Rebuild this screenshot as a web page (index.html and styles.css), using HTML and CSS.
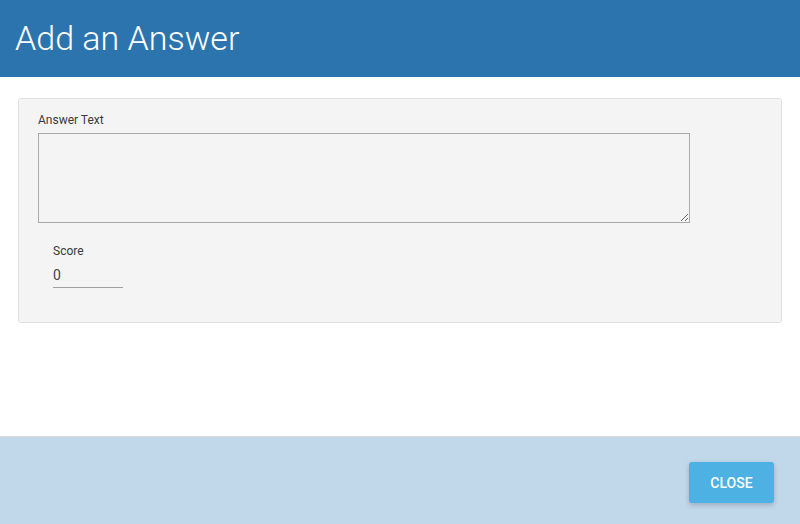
FILE: index.html
```html
<!DOCTYPE html>
<html>
<head>
<meta charset="utf-8">
<link rel="stylesheet" href="styles.css">
</head>
<body>
<div class="modal">
  <header class="modal-header">
    <h1 class="modal-title">Add an Answer</h1>
  </header>
  <main class="modal-body">
    <section class="panel">
      <label class="field-label">Answer Text</label>
      <textarea class="answer-text"></textarea>
      <div class="score-group">
        <label class="field-label">Score</label>
        <div class="score-input">0</div>
      </div>
    </section>
  </main>
  <footer class="modal-footer">
    <button class="btn-close">CLOSE</button>
  </footer>
</div>
</body>
</html>
```
FILE: styles.css
```css
* { box-sizing: border-box; }
html, body { margin: 0; padding: 0; }
body {
  font-family: Roboto, "Liberation Sans", sans-serif;
  width: 800px;
  height: 524px;
  overflow: hidden;
  background: #fff;
}
.modal {
  display: flex;
  flex-direction: column;
  height: 524px;
}
.modal-header {
  height: 77px;
  background: #2c74ad;
  padding: 0 15px 2px;
  display: flex;
  align-items: center;
}
.modal-title {
  margin: 0;
  font-weight: 300;
  font-size: 34px;
  color: #fff;
  line-height: 1;
}
.modal-body {
  flex: 1;
  padding: 21px 18px 0;
}
.panel {
  background: #f4f4f4;
  border: 1px solid #e0e0e0;
  border-radius: 3px;
  height: 225px;
  padding: 13px 19px 0;
  display: flex;
  flex-direction: column;
  align-items: flex-start;
}
.field-label {
  font-size: 12px;
  color: #3a3a3a;
  line-height: 16px;
}
.answer-text {
  margin-top: 5px;
  width: 652px;
  height: 90px;
  background: #f4f4f4;
  border: 1px solid #a8a8a8;
  border-radius: 0;
  resize: vertical;
  display: block;
}
.score-group {
  margin-top: 20px;
  margin-left: 15px;
  display: flex;
  flex-direction: column;
}
.score-input {
  margin-top: 8px;
  width: 70px;
  font-size: 14px;
  color: #444;
  line-height: 17px;
  padding-bottom: 3px;
  border-bottom: 1px solid #a0a0a0;
}
.modal-footer {
  height: 88px;
  background: #c1d7ea;
  border-top: 1px solid #dcdcdc;
  display: flex;
  justify-content: flex-end;
  align-items: flex-start;
  padding: 25px 26px 0 0;
}
.btn-close {
  width: 85px;
  height: 41px;
  background: #4db1e3;
  color: #fff;
  border: none;
  border-radius: 3px;
  font-family: Roboto, "Liberation Sans", sans-serif;
  font-weight: 500;
  font-size: 14px;
  box-shadow: 0 2px 5px rgba(0,0,0,0.2);
}
```
